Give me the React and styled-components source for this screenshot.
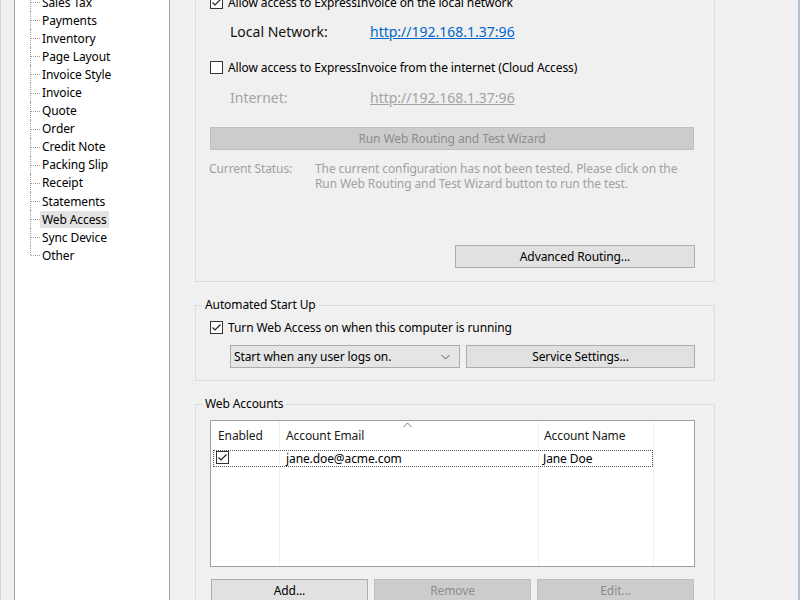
import React from "react";
import styled, { createGlobalStyle } from "styled-components";

const Global = createGlobalStyle`
  html, body { margin: 0; padding: 0; background: #f0f0f0; overflow: hidden; }
  body { font-family: "Noto Sans", "Segoe UI", sans-serif; font-size: 12px; color: #000; letter-spacing: -0.1px; }
  * { box-sizing: border-box; }
`;

const Viewport = styled.div`
  width: 800px;
  height: 600px;
  overflow: hidden;
  background: #f0f0f0;
  border-left: 1px solid #cdd6df;
  border-right: 2px solid #b3c1ce;
`;

const Dialog = styled.div`
  display: flex;
  align-items: flex-start;
  margin-top: -20px;
  padding-left: 13px;
`;

const TreePanel = styled.div`
  width: 156px;
  height: 700px;
  background: #fff;
  border: 1px solid #a0a0a0;
  padding-top: 12px;
  flex-shrink: 0;
`;

const TreeRow = styled.div`
  position: relative;
  height: 18.1px;
  display: flex;
  align-items: center;
  padding-left: 25px;
  &::before {
    content: "";
    position: absolute;
    left: 15px;
    top: 0;
    height: ${(p) => (p.$last ? "50%" : "100%")};
    border-left: 1px dotted #a0a0a0;
  }
  &::after {
    content: "";
    position: absolute;
    left: 16px;
    top: 50%;
    width: 9px;
    border-top: 1px dotted #a0a0a0;
  }
`;

const TreeLabel = styled.span`
  padding: 1px 2px;
  line-height: 15px;
  background: ${(p) => (p.$selected ? "#e3e3e3" : "transparent")};
`;

const Content = styled.div`
  display: flex;
  flex-direction: column;
  margin-left: 25px;
  width: 520px;
`;

const Box = styled.div`
  border: 1px solid #dcdcdc;
  padding: 13px 19px 13px 14px;
  display: flex;
  flex-direction: column;
`;

const FieldSet = styled.fieldset`
  margin: ${(p) => p.$mt}px 0 0 0;
  border: 1px solid #dcdcdc;
  padding: 0 19px 12px 14px;
  display: flex;
  flex-direction: column;
  min-width: 0;
`;

const Legend = styled.legend`
  margin-left: -8px;
  padding: 0 3px;
  line-height: 16px;
  font-size: 12px;
`;

const CheckRow = styled.label`
  display: flex;
  align-items: center;
  height: 16px;
  gap: 5px;
  margin-top: ${(p) => p.$mt || 0}px;
  color: #000;
`;

const CheckBox = styled.span`
  width: 13px;
  height: 13px;
  border: 1px solid #333;
  background: #fff;
  display: inline-flex;
  align-items: center;
  justify-content: center;
  flex-shrink: 0;
`;

const Check = ({ checked }) => (
  <CheckBox>
    {checked && (
      <svg width="11" height="11" viewBox="0 0 11 11">
        <polyline points="1.5,5.5 4,8 9.5,2.5" fill="none" stroke="#222" strokeWidth="1.2" />
      </svg>
    )}
  </CheckBox>
);

const UrlRow = styled.div`
  display: flex;
  align-items: center;
  height: 20px;
  margin-top: ${(p) => p.$mt}px;
  padding-left: 20px;
  font-size: 14px;
  letter-spacing: 0;
`;

const UrlLabel = styled.span`
  width: 140px;
  color: ${(p) => (p.$disabled ? "#a3a3a3" : "#111")};
`;

const Link = styled.span`
  text-decoration: underline;
  color: ${(p) => (p.$disabled ? "#a3a3a3" : "#0066cc")};
`;

const Button = styled.div`
  height: 23px;
  display: flex;
  align-items: center;
  justify-content: center;
  background: ${(p) => (p.$disabled ? "#cccccc" : "#e1e1e1")};
  border: 1px solid ${(p) => (p.$disabled ? "#bfbfbf" : "#adadad")};
  color: ${(p) => (p.$disabled ? "#8c8c8c" : "#000")};
  width: ${(p) => (p.$w ? `${p.$w}px` : "auto")};
  flex: ${(p) => (p.$w ? "none" : "1")};
  margin-top: ${(p) => p.$mt || 0}px;
  align-self: ${(p) => p.$align || "stretch"};
`;

const Status = styled.div`
  display: flex;
  margin-top: 11px;
  line-height: 15px;
  color: #a0a0a0;
  margin-left: -1px;
`;

const StatusLabel = styled.div`
  width: 106px;
  flex-shrink: 0;
`;

const Row = styled.div`
  display: flex;
  gap: 6px;
  margin-top: ${(p) => p.$mt || 0}px;
  padding-left: ${(p) => p.$pl || 0}px;
`;

const Select = styled.div`
  width: 230px;
  height: 23px;
  background: #e5e5e5;
  border: 1px solid #adadad;
  display: flex;
  align-items: center;
  justify-content: space-between;
  padding: 0 9px 0 3px;
`;

const ListView = styled.div`
  margin-top: 8px;
  height: 147px;
  background: #fff;
  border: 1px solid #a0a0a0;
  display: flex;
  flex-direction: column;
  background-image: linear-gradient(#f0f0f0, #f0f0f0), linear-gradient(#f0f0f0, #f0f0f0),
    linear-gradient(#f0f0f0, #f0f0f0);
  background-size: 1px 100%;
  background-repeat: no-repeat;
  background-position: 68px 0, 327px 0, 442px 0;
`;

const Header = styled.div`
  position: relative;
  display: grid;
  grid-template-columns: 68px 259px 115px 1fr;
  height: 29px;
  align-items: center;
`;

const HeadCell = styled.div`
  padding-left: ${(p) => p.$pl}px;
  color: #1a1a1a;
`;

const SortArrow = styled.svg`
  position: absolute;
  left: 192px;
  top: 1px;
`;

const DataRow = styled.div`
  display: grid;
  grid-template-columns: 65px 259px 115px;
  height: 17px;
  margin-left: 2px;
  width: 440px;
  align-items: center;
  outline: 1px dotted #555;
  outline-offset: -1px;
`;

const Cell = styled.div`
  padding-left: ${(p) => p.$pl || 0}px;
  line-height: 15px;
`;

const SmallCheck = styled.span`
  width: 13px;
  height: 13px;
  border: 1px solid #333;
  margin-left: 3px;
  display: inline-flex;
  align-items: center;
  justify-content: center;
  background: #fff;
`;

const treeItems = [
  "Sales Tax",
  "Payments",
  "Inventory",
  "Page Layout",
  "Invoice Style",
  "Invoice",
  "Quote",
  "Order",
  "Credit Note",
  "Packing Slip",
  "Receipt",
  "Statements",
  "Web Access",
  "Sync Device",
  "Other",
];

export default function App() {
  return (
    <>
      <Global />
      <Viewport>
        <Dialog>
          <TreePanel>
            {treeItems.map((t, i) => (
              <TreeRow key={t} $last={i === treeItems.length - 1}>
                <TreeLabel $selected={t === "Web Access"}>{t}</TreeLabel>
              </TreeRow>
            ))}
          </TreePanel>
          <Content>
            <Box>
              <CheckRow>
                <Check checked />
                Allow access to ExpressInvoice on the local network
              </CheckRow>
              <UrlRow $mt={11}>
                <UrlLabel>Local Network:</UrlLabel>
                <Link>http://192.168.1.37:96</Link>
              </UrlRow>
              <CheckRow $mt={18}>
                <Check />
                Allow access to ExpressInvoice from the internet (Cloud Access)
              </CheckRow>
              <UrlRow $mt={12}>
                <UrlLabel $disabled>Internet:</UrlLabel>
                <Link $disabled>http://192.168.1.37:96</Link>
              </UrlRow>
              <Button $disabled $mt={20} $w={484} $align="flex-start">
                Run Web Routing and Test Wizard
              </Button>
              <Status>
                <StatusLabel>Current Status:</StatusLabel>
                <div>
                  The current configuration has not been tested. Please click on the
                  <br />
                  Run Web Routing and Test Wizard button to run the test.
                </div>
              </Status>
              <Button $mt={54} $w={240} $align="flex-end">
                Advanced Routing...
              </Button>
            </Box>

            <FieldSet $mt={15}>
              <Legend>Automated Start Up</Legend>
              <CheckRow $mt={6}>
                <Check checked />
                Turn Web Access on when this computer is running
              </CheckRow>
              <Row $mt={10} $pl={20}>
                <Select>
                  <span>Start when any user logs on.</span>
                  <svg width="9" height="6" viewBox="0 0 9 6">
                    <polyline points="0.5,1 4.5,5 8.5,1" fill="none" stroke="#555" strokeWidth="1" />
                  </svg>
                </Select>
                <Button $w={229}>Service Settings...</Button>
              </Row>
            </FieldSet>

            <FieldSet $mt={15}>
              <Legend>Web Accounts</Legend>
              <ListView>
                <Header>
                  <SortArrow width="9" height="6" viewBox="0 0 9 6">
                    <polyline points="0.5,5 4.5,1 8.5,5" fill="none" stroke="#777" strokeWidth="1" />
                  </SortArrow>
                  <HeadCell $pl={7}>Enabled</HeadCell>
                  <HeadCell $pl={7}>Account Email</HeadCell>
                  <HeadCell $pl={6}>Account Name</HeadCell>
                  <div />
                </Header>
                <DataRow>
                  <Cell>
                    <SmallCheck>
                      <svg width="11" height="11" viewBox="0 0 11 11">
                        <polyline points="1.5,5.5 4,8 9.5,2.5" fill="none" stroke="#222" strokeWidth="1.2" />
                      </svg>
                    </SmallCheck>
                  </Cell>
                  <Cell $pl={8}>jane.doe@acme.com</Cell>
                  <Cell $pl={6}>Jane Doe</Cell>
                </DataRow>
              </ListView>
              <Row $mt={12} style={{ marginLeft: 1 }}>
                <Button $w={157}>Add...</Button>
                <Button $w={157} $disabled>Remove</Button>
                <Button $w={157} $disabled>Edit...</Button>
              </Row>
            </FieldSet>
          </Content>
        </Dialog>
      </Viewport>
    </>
  );
}
